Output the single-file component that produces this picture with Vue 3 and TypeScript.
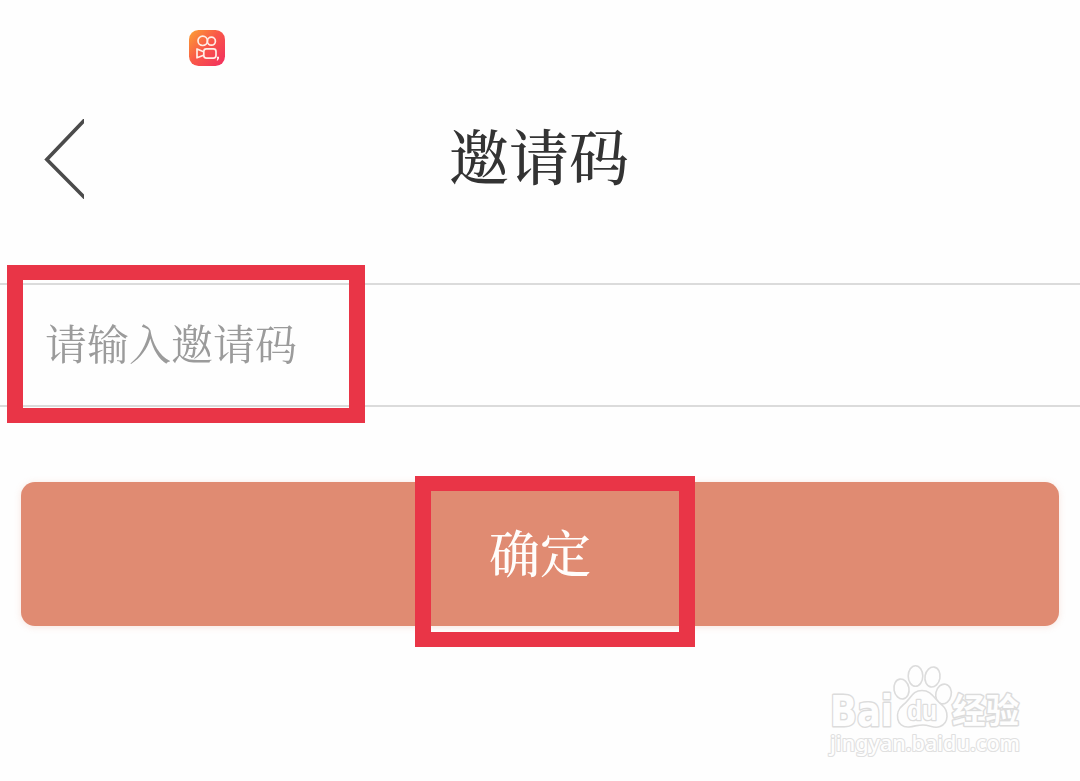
<script setup lang="ts">
import { ref } from 'vue'

const title = '邀请码'
const placeholder = '请输入邀请码'
const confirmLabel = '确定'
const code = ref<string>('')
</script>

<template>
  <main class="screen">
    <header class="status-bar">
      <svg class="app-icon" viewBox="0 0 36 36" aria-hidden="true">
        <defs>
          <linearGradient id="iconFill" x1="0" y1="0.1" x2="0.9" y2="0.9">
            <stop offset="0" stop-color="#fb9a35" />
            <stop offset="0.5" stop-color="#f95748" />
            <stop offset="1" stop-color="#f3355c" />
          </linearGradient>
        </defs>
        <rect width="36" height="36" rx="9.5" fill="url(#iconFill)" />
        <g fill="none" stroke="#ffeee6" stroke-width="1.7" stroke-linejoin="round">
          <circle cx="13.7" cy="10.8" r="4.7" />
          <circle cx="22.4" cy="11.2" r="4" />
          <rect x="14.8" y="18.8" width="12.2" height="9.4" rx="2.6" />
          <path d="M14.6 21.8 L8 19 V27.8 L14.6 25.2" />
        </g>
        <path d="M28 26.8 h2 v1.8 l-1.2 1.8 h-1.1 l.6-1.8 h-.3z" fill="#fff3ed" />
      </svg>
    </header>

    <nav class="title-bar">
      <button class="back" type="button" aria-label="返回">
        <svg viewBox="0 0 40 80" aria-hidden="true">
          <path d="M42 -0.5 L2.8 40.5 L42 80" />
        </svg>
      </button>
      <h1 class="title">{{ title }}</h1>
    </nav>

    <section class="field">
      <input v-model="code" class="input" type="text" :placeholder="placeholder" />
      <div class="mark mark-field"></div>
    </section>

    <section class="action">
      <button class="confirm" type="button">{{ confirmLabel }}</button>
      <div class="mark mark-confirm"></div>
    </section>

    <footer class="watermark">
      <svg viewBox="0 0 220 110">
        <g class="wm-shape">
          <ellipse cx="86.5" cy="34" rx="7.5" ry="10" transform="rotate(-10 86.5 34)" />
          <ellipse cx="100.5" cy="21" rx="7.3" ry="10.3" />
          <ellipse cx="117.5" cy="22" rx="7.5" ry="10" transform="rotate(10 117.5 22)" />
          <ellipse cx="128.5" cy="39" rx="7.7" ry="10" transform="rotate(12 128.5 39)" />
          <path d="M107 35.5 C97 35.5 96 44 88 50 C79 57 81 73 94 72 C101 71 103 70 108 70 C115 70 119 74 125 71.5 C134 68 134 56 127 50 C119 44 117 35.5 107 35.5Z" />
        </g>
        <g class="wm-text">
          <text class="wm-bai" x="15" y="70.5" font-size="42" textLength="63" lengthAdjust="spacingAndGlyphs">Bai</text>
          <text class="wm-du" x="92" y="65" font-size="27" textLength="30" lengthAdjust="spacingAndGlyphs">du</text>
          <text class="wm-cjk" x="137" y="68" font-size="34" textLength="67" lengthAdjust="spacingAndGlyphs">经验</text>
          <text class="wm-url" x="15" y="95.5" font-size="22" textLength="190" lengthAdjust="spacingAndGlyphs">jingyan.baidu.com</text>
        </g>
      </svg>
    </footer>
  </main>
</template>

<style>
body {
  margin: 0;
  background: #fefefe;
}
</style>

<style scoped>
.screen {
  box-sizing: border-box;
  width: 1080px;
  height: 781px;
  display: flex;
  flex-direction: column;
  overflow: hidden;
  background: #fefefe;
  font-family: "Noto Serif CJK SC", "Noto Serif SC", "Source Han Serif SC", "Noto Sans CJK SC", serif;
}

.status-bar {
  height: 96px;
  flex: none;
  box-sizing: border-box;
  padding: 30px 0 0 189px;
}

.app-icon {
  display: block;
  width: 36px;
  height: 36px;
}

.title-bar {
  flex: none;
  height: 187px;
  box-sizing: border-box;
  padding: 18px 46px 0 44px;
  display: grid;
  grid-template-columns: 42px 1fr 42px;
  align-items: start;
}

.back {
  width: 40px;
  height: 80px;
  margin-top: 5px;
  padding: 0;
  border: 0;
  background: none;
}

.back svg {
  display: block;
  width: 40px;
  height: 80px;
  overflow: hidden;
  fill: none;
  stroke: #4b4b4b;
  stroke-width: 3.6;
}

.title {
  margin: 0;
  text-align: center;
  font-size: 60px;
  line-height: 80px;
  font-weight: 500;
  color: #333;
}

.field {
  position: relative;
  flex: none;
  box-sizing: border-box;
  height: 124px;
  border-top: 2px solid #dbdbdb;
  border-bottom: 2px solid #dbdbdb;
}

.input {
  display: block;
  box-sizing: border-box;
  width: 100%;
  height: 120px;
  padding: 0 45px 6px;
  border: 0;
  outline: 0;
  background: transparent;
  font: 400 42px/114px "Noto Serif CJK SC", "Noto Serif SC", "Source Han Serif SC", "Noto Sans CJK SC", serif;
  color: #333;
  will-change: transform;
}

.input::placeholder {
  color: #9b9b9b;
  opacity: 1;
}

.action {
  position: relative;
  flex: none;
  padding: 75px 21px 0;
}

.confirm {
  display: block;
  box-sizing: border-box;
  width: 100%;
  height: 144px;
  padding: 0 0 6px;
  border: 0;
  border-radius: 14px;
  background: #e08b72;
  box-shadow: 0 1px 7px rgba(224, 139, 114, 0.22);
  color: #fffdfb;
  font-family: inherit;
  font-size: 51px;
  line-height: 138px;
  font-weight: 500;
}

.mark {
  position: absolute;
  box-sizing: border-box;
  border: solid #e93547;
  border-width: 15px 16px;
  pointer-events: none;
}

.mark-field {
  left: 7px;
  top: -20px;
  width: 358px;
  height: 158px;
}

.mark-confirm {
  left: 415px;
  top: 69px;
  width: 280px;
  height: 171px;
}

.watermark {
  flex: none;
  margin: 29px 45px 0 auto;
  width: 220px;
  height: 110px;
}

.watermark svg {
  display: block;
  width: 220px;
  height: 110px;
}

.wm-shape {
  fill: #fefefe;
  stroke: #dcdcdc;
  stroke-width: 1.6;
}

.wm-text {
  fill: #fefefe;
  stroke: #dcdcdc;
  stroke-width: 3;
  stroke-linejoin: round;
  paint-order: stroke;
  font-family: "Liberation Sans", Arial, sans-serif;
  font-weight: 700;
}

.wm-bai {
  font-family: "DejaVu Sans", sans-serif;
}

.wm-du {
  stroke-width: 2.6;
}

.wm-cjk {
  font-family: "Noto Sans CJK SC", sans-serif;
}

.wm-url {
  font-family: "Noto Sans", "Open Sans", sans-serif;
  font-weight: 500;
  stroke: #e0e0e0;
  stroke-width: 2.2;
}
</style>
